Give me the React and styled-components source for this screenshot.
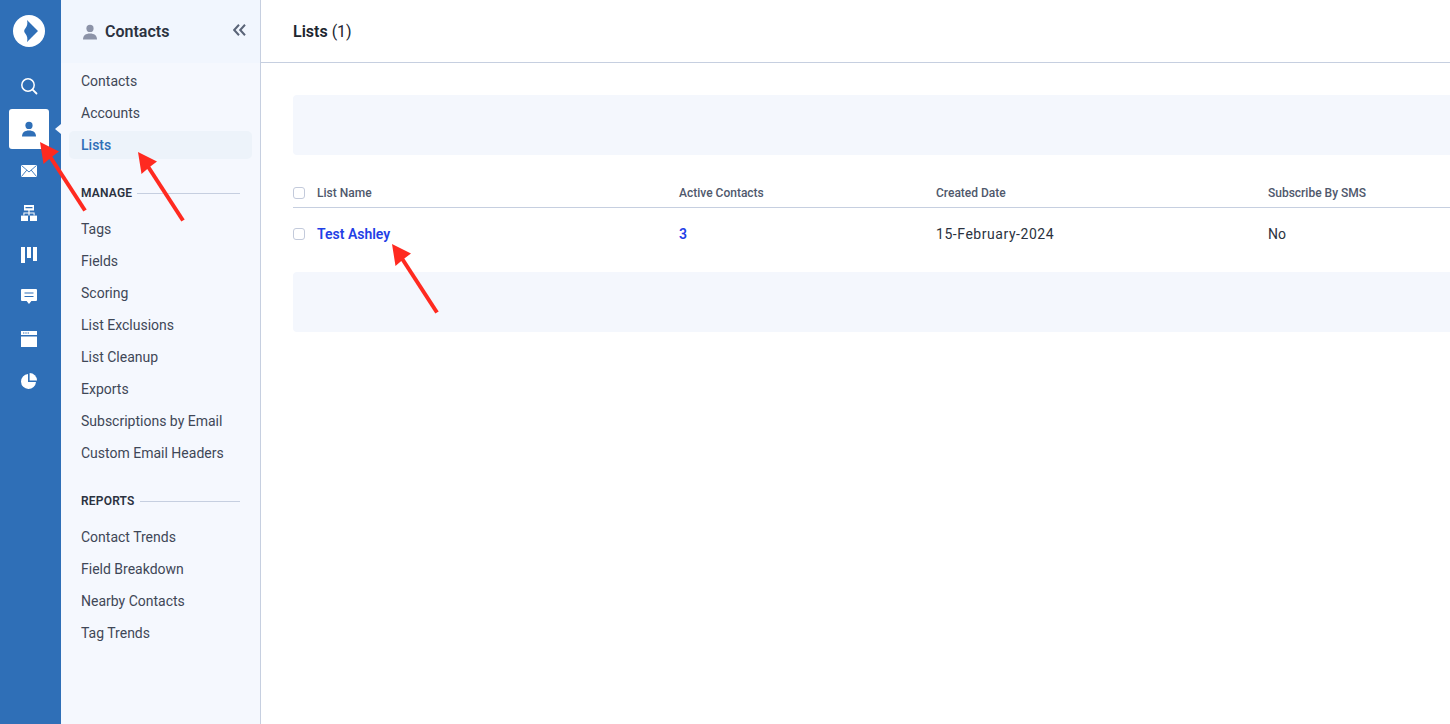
import React from "react";
import styled, { createGlobalStyle } from "styled-components";

const GlobalStyle = createGlobalStyle`
    html, body {
        margin: 0;
        padding: 0;
        height: 100%;
        overflow: hidden;
        background: #fff;
        font-family: Roboto, "Liberation Sans", sans-serif;
    }
    * { box-sizing: border-box; }
`;

const Page = styled.div`
    position: relative;
    display: flex;
    width: 1450px;
    height: 724px;
    overflow: hidden;
`;

const Rail = styled.nav`
    width: 61px;
    flex: none;
    background: #2f6fb7;
    display: flex;
    flex-direction: column;
    align-items: center;
    padding: 15px 3px 0 0;
`;

const Logo = styled.div`
    width: 32px;
    height: 32px;
    margin-bottom: 19px;
`;

const RailItem = styled.div`
    position: relative;
    width: 40px;
    height: 40px;
    margin-bottom: ${(p) => p.$gap || 2}px;
    display: flex;
    align-items: center;
    justify-content: center;
    border-radius: 3px;
    color: #fff;
    background: ${(p) => (p.$active ? "#fff" : "transparent")};
    ${(p) =>
        p.$active &&
        `&::after {
            content: "";
            position: absolute;
            left: 46px;
            top: 15px;
            border: 5px solid transparent;
            border-left: 0;
            border-right: 6px solid #f5f8fe;
        }`}
`;

const Side = styled.aside`
    width: 200px;
    flex: none;
    background: #f5f8fe;
    border-right: 1px solid #c6cfe0;
    height: 100%;
`;

const SideHead = styled.div`
    height: 63px;
    background: #f1f6fe;
    display: flex;
    align-items: center;
    padding: 0 14px 0 21px;
    color: #2b3240;
`;

const SideTitle = styled.div`
    font-size: 16px;
    font-weight: 600;
    margin-left: 7px;
    flex: 1;
`;

const Collapse = styled.div`
    display: flex;
    color: #5a6478;
    margin-top: -3px;
`;

const Menu = styled.div`
    padding: 4px 8px 0;
`;

const MenuItem = styled.div`
    height: 28px;
    margin-bottom: 4px;
    padding-left: 12px;
    display: flex;
    align-items: center;
    font-size: 14px;
    border-radius: 5px;
    color: ${(p) => (p.$active ? "#2f6fb7" : "#3f4757")};
    font-weight: ${(p) => (p.$active ? 500 : 400)};
    background: ${(p) => (p.$active ? "#edf3fa" : "transparent")};
`;

const SectionHead = styled.div`
    display: flex;
    align-items: center;
    gap: 5px;
    height: 16px;
    margin: 26px 12px 14px 12px;
    font-size: 12px;
    font-weight: 600;
    color: #2b3240;
    letter-spacing: 0.2px;
    &::after {
        content: "";
        flex: 1;
        height: 1px;
        background: #c6cfe0;
    }
`;

const Main = styled.main`
    flex: 1;
    min-width: 0;
`;

const TopBar = styled.header`
    height: 63px;
    border-bottom: 1px solid #c6cfe0;
    padding-left: 32px;
    display: flex;
    align-items: center;
    font-size: 16px;
    color: #20252f;
`;

const TopTitle = styled.span`
    font-weight: 600;
    margin-right: 4px;
`;

const Content = styled.div`
    padding: 32px 0 0 32px;
`;

const Band = styled.div`
    height: 60px;
    background: #f4f7fd;
    border-radius: 4px 0 0 4px;
    margin-top: ${(p) => p.$top || 0}px;
`;

const Row = styled.div`
    display: grid;
    grid-template-columns: 24px 362px 257px 332px 1fr;
    align-items: center;
    height: ${(p) => (p.$head ? 53 : 52)}px;
    padding-top: ${(p) => (p.$head ? 24 : 0)}px;
    border-bottom: ${(p) => (p.$head ? "1px solid #c6cfe0" : "none")};
    font-size: ${(p) => (p.$head ? 12 : 14)}px;
    font-weight: ${(p) => (p.$head ? 500 : 400)};
    color: ${(p) => (p.$head ? "#4f586c" : "#2b3240")};
`;

const Check = styled.span`
    width: 12px;
    height: 12px;
    border: 1px solid #c3cadb;
    border-radius: 3px;
    background: #fff;
`;

const RowLink = styled.a`
    color: #1f40e6;
    font-weight: 600;
    text-decoration: none;
`;

const DateCell = styled.span`
    letter-spacing: 0.55px;
`;

const Arrows = styled.svg`
    position: absolute;
    left: 0;
    top: 0;
    pointer-events: none;
`;

const PersonIcon = ({ color, size = 16 }) => (
    <svg width={size} height={size} viewBox="0 0 16 16" fill={color}>
        <circle cx="8" cy="4.4" r="3.6" />
        <path d="M1 15.5c0-4 2.6-6 7-6s7 2 7 6z" />
    </svg>
);

const LogoIcon = () => (
    <svg width="32" height="32" viewBox="0 0 32 32">
        <circle cx="16" cy="16" r="16" fill="#fff" />
        <path d="M14 5L25 16 14 27C15 23.5 14 20.5 12.3 18.5 10.8 16.8 10.8 15.2 12.3 13.5 14 11.5 15 8.5 14 5z" fill="#2f6fb7" />
    </svg>
);

const SearchIcon = () => (
    <svg width="18" height="18" viewBox="0 0 18 18" fill="none" stroke="#fff" strokeWidth="1.5">
        <circle cx="8" cy="8" r="6.2" />
        <path d="M12.6 12.6l3.9 3.9" strokeLinecap="round" strokeWidth="1.8" />
    </svg>
);

const MailIcon = () => (
    <svg width="16" height="12" viewBox="0 0 16 12">
        <rect width="16" height="12" fill="#fff" />
        <path d="M.4 .4L8 7l7.6-6.6M.4 11.6l5.4-6.5M15.6 11.6l-5.4-6.5" fill="none" stroke="#2f6fb7" strokeWidth="0.9" />
    </svg>
);

const SitemapIcon = () => (
    <svg width="16" height="16" viewBox="0 0 16 16" fill="#fff">
        <path d="M3 0h10v5.4H8.6v2.1h5v3h-1v-2H8.6v2h-1.2v-2H3.4v2h-1v-3h5V5.4H3zM4.5 2v1.2h7V2z" fillRule="evenodd" />
        <rect x="0" y="10.6" width="7" height="5.4" />
        <rect x="9" y="10.6" width="7" height="5.4" />
    </svg>
);

const BoardIcon = () => (
    <svg width="16" height="16" viewBox="0 0 16 16" fill="#fff">
        <rect x="0" y="0" width="4" height="16" />
        <rect x="6" y="0" width="4" height="11" />
        <rect x="12" y="0" width="4" height="14" />
    </svg>
);

const ChatIcon = () => (
    <svg width="16" height="16" viewBox="0 0 16 16">
        <path d="M1 0h14a1 1 0 0 1 1 1v10a1 1 0 0 1-1 1h-4.6L8 15l-2.4-3H1a1 1 0 0 1-1-1V1a1 1 0 0 1 1-1z" fill="#fff" />
        <path d="M3.5 4h9M3.5 7.5h9" stroke="#2f6fb7" strokeWidth="1.1" />
    </svg>
);

const WindowIcon = () => (
    <svg width="16" height="16" viewBox="0 0 16 16">
        <path d="M0 0h16v4H0zM0 5.5h16V16H0z" fill="#fff" />
        <path d="M2 2h1.4M4.3 2h1.4M6.6 2H8" stroke="#2f6fb7" strokeWidth="1.2" />
    </svg>
);

const PieIcon = () => (
    <svg width="16" height="16" viewBox="0 0 16 16" fill="#fff">
        <path d="M7 1a7.5 7.5 0 1 0 8 8H7z" />
        <path d="M8.6 0A7.5 7.5 0 0 1 16 7.4H8.6z" />
    </svg>
);

const CollapseIcon = () => (
    <svg width="13" height="12" viewBox="0 0 13 12" fill="none" stroke="currentColor" strokeWidth="2">
        <path d="M6 .8L1.2 6 6 11.2M12 .8L7.2 6 12 11.2" />
    </svg>
);

const Arrow = ({ tipX, tipY }) => (
    <g transform={`translate(${tipX} ${tipY})`}>
        <path d="M0 0L19 9.5 11 15.5 3.5 22z" fill="#ff2a20" />
        <path d="M9 13L45 68.5" stroke="#ff2a20" strokeWidth="4" />
    </g>
);

const manageLinks = [
    "Tags",
    "Fields",
    "Scoring",
    "List Exclusions",
    "List Cleanup",
    "Exports",
    "Subscriptions by Email",
    "Custom Email Headers",
];

const reportLinks = [
    "Contact Trends",
    "Field Breakdown",
    "Nearby Contacts",
    "Tag Trends",
];

const App = () => (
    <Page>
        <GlobalStyle />
        <Rail>
            <Logo>
                <LogoIcon />
            </Logo>
            <RailItem $gap={3}>
                <SearchIcon />
            </RailItem>
            <RailItem $active>
                <PersonIcon color="#2f6fb7" />
            </RailItem>
            <RailItem>
                <MailIcon />
            </RailItem>
            <RailItem>
                <SitemapIcon />
            </RailItem>
            <RailItem>
                <BoardIcon />
            </RailItem>
            <RailItem>
                <ChatIcon />
            </RailItem>
            <RailItem>
                <WindowIcon />
            </RailItem>
            <RailItem>
                <PieIcon />
            </RailItem>
        </Rail>
        <Side>
            <SideHead>
                <PersonIcon color="#8c93a8" />
                <SideTitle>Contacts</SideTitle>
                <Collapse>
                    <CollapseIcon />
                </Collapse>
            </SideHead>
            <Menu>
                <MenuItem>Contacts</MenuItem>
                <MenuItem>Accounts</MenuItem>
                <MenuItem $active>Lists</MenuItem>
                <SectionHead>MANAGE</SectionHead>
                {manageLinks.map((link) => (
                    <MenuItem key={link}>{link}</MenuItem>
                ))}
                <SectionHead>REPORTS</SectionHead>
                {reportLinks.map((link) => (
                    <MenuItem key={link}>{link}</MenuItem>
                ))}
            </Menu>
        </Side>
        <Main>
            <TopBar>
                <TopTitle>Lists</TopTitle> (1)
            </TopBar>
            <Content>
                <Band />
                <Row $head>
                    <Check />
                    <span>List Name</span>
                    <span>Active Contacts</span>
                    <span>Created Date</span>
                    <span>Subscribe By SMS</span>
                </Row>
                <Row>
                    <Check />
                    <RowLink href="#">Test Ashley</RowLink>
                    <RowLink href="#">3</RowLink>
                    <DateCell>15-February-2024</DateCell>
                    <span>No</span>
                </Row>
                <Band $top={12} />
            </Content>
        </Main>
        <Arrows width="1450" height="724" viewBox="0 0 1450 724">
            <Arrow tipX={40} tipY={142} />
            <Arrow tipX={138} tipY={152} />
            <Arrow tipX={392} tipY={244} />
        </Arrows>
    </Page>
);

export default App;
